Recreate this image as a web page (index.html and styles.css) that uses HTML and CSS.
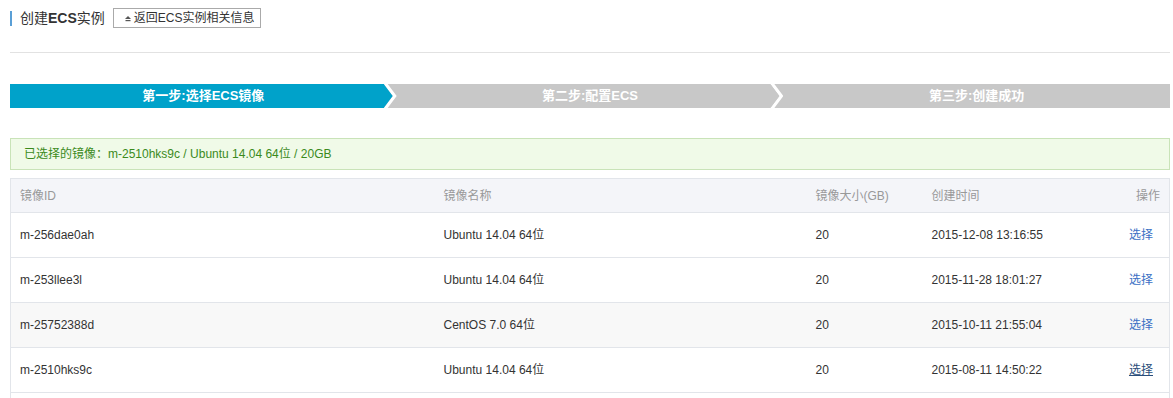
FILE: index.html
```html
<!DOCTYPE html>
<html lang="zh-CN">
<head>
<meta charset="utf-8">
<title>创建ECS实例</title>
<link rel="stylesheet" href="styles.css">
</head>
<body>
<div class="page">
  <div class="title-row">
    <h1 class="title">创建<b class="strong">ECS</b>实例</h1>
    <button class="back-btn" type="button">
      <svg class="back-icon" width="6" height="7" viewBox="0 0 6 7"><path d="M0 4 L3 1 L6 4 Z" fill="#555"/><rect x="0.5" y="5" width="5" height="1.2" fill="#555"/></svg>
      <span>返回ECS实例相关信息</span>
    </button>
  </div>
  <div class="divider"></div>

  <div class="steps">
    <div class="step active">第一步:选择ECS镜像</div>
    <div class="step">第二步:配置ECS</div>
    <div class="step last">第三步:创建成功</div>
  </div>

  <div class="alert">已选择的镜像：m-2510hks9c / Ubuntu 14.04 64位 / 20GB</div>

  <table class="images">
    <colgroup>
      <col class="c-id"><col class="c-name"><col class="c-size"><col class="c-time"><col class="c-op">
    </colgroup>
    <thead>
      <tr><th>镜像ID</th><th>镜像名称</th><th>镜像大小(GB)</th><th>创建时间</th><th class="op">操作</th></tr>
    </thead>
    <tbody>
      <tr><td>m-256dae0ah</td><td>Ubuntu 14.04 64位</td><td>20</td><td>2015-12-08 13:16:55</td><td class="op"><a href="#">选择</a></td></tr>
      <tr><td>m-253llee3l</td><td>Ubuntu 14.04 64位</td><td>20</td><td>2015-11-28 18:01:27</td><td class="op"><a href="#">选择</a></td></tr>
      <tr class="striped"><td>m-25752388d</td><td>CentOS 7.0 64位</td><td>20</td><td>2015-10-11 21:55:04</td><td class="op"><a href="#">选择</a></td></tr>
      <tr><td>m-2510hks9c</td><td>Ubuntu 14.04 64位</td><td>20</td><td>2015-08-11 14:50:22</td><td class="op"><a href="#" class="hover">选择</a></td></tr>
      <tr class="more"><td></td><td></td><td></td><td></td><td></td></tr>
    </tbody>
  </table>
</div>
</body>
</html>
```

FILE: styles.css
```css
* { box-sizing: border-box; }
html, body { margin: 0; padding: 0; background: #fff; }
body {
  font-family: "Liberation Sans", "Noto Sans CJK SC", sans-serif;
  color: #333;
  font-size: 12px;
  overflow: hidden;
}
.page {
  width: 1160px;
  margin: 0 0 0 10px;
  padding-top: 8px;
}
.title-row {
  display: flex;
  align-items: center;
  height: 20px;
}
.title {
  margin: 0;
  font-size: 14px;
  font-weight: normal;
  line-height: 15px;
  height: 15px;
  border-left: 2px solid #5a9fd6;
  padding-left: 8px;
  color: #333;
}
.title .strong { font-weight: bold; }
.back-btn {
  margin-left: 8px;
  height: 20px;
  display: flex;
  align-items: center;
  gap: 2px;
  padding: 0 6px 0 11px;
  border: 1px solid #aaa;
  background: #fff;
  font-family: inherit;
  font-size: 12px;
  line-height: 14px;
  color: #333;
  cursor: pointer;
}
.back-icon { display: block; margin-right: 1px; }
.divider {
  margin-top: 24px;
  border-top: 1px solid #e2e2e2;
}
.steps {
  margin-top: 31px;
  display: flex;
  height: 24px;
  background: #c8c8c8;
}
.step {
  --c: #c8c8c8;
  flex: 1;
  position: relative;
  color: #fff;
  font-weight: bold;
  font-size: 13px;
  line-height: 24px;
  text-align: center;
  background: linear-gradient(to right, var(--c) calc(100% - 13px), transparent calc(100% - 13px));
}
.step.active { --c: #00a2ca; }
.step.last { background: var(--c); }
.step:not(.last)::before,
.step:not(.last)::after {
  content: "";
  position: absolute;
  top: 0;
  right: 0;
  width: 13px;
  height: 100%;
}
.step:not(.last)::before {
  background: #fff;
  clip-path: polygon(0 0, 4px 0, 13px 50%, 4px 100%, 0 100%, 9px 50%);
}
.step:not(.last)::after {
  background: var(--c);
  clip-path: polygon(0 0, 9px 50%, 0 100%);
}
.alert {
  margin-top: 30px;
  height: 32px;
  line-height: 30px;
  padding: 0 13px;
  border: 1px solid #c9e3b8;
  background: #f0fae8;
  color: #3b8a1c;
  font-size: 12px;
}
.images {
  margin-top: 8px;
  width: 100%;
  border-collapse: collapse;
  table-layout: fixed;
  border-left: 1px solid #e2e5ea;
  border-right: 1px solid #e2e5ea;
}
.c-id { width: 424px; }
.c-name { width: 372px; }
.c-size { width: 116px; }
.c-time { width: 180px; }
.images th,
.images td {
  line-height: 16px;
  vertical-align: middle;
  white-space: nowrap;
}
.images th {
  height: 34px;
  background: #f4f5f9;
  color: #999;
  font-weight: normal;
  text-align: left;
  padding: 0 9px;
  border-top: 1px solid #e2e5ea;
  border-bottom: 1px solid #e2e5ea;
}
.images td {
  height: 45px;
  padding: 0 9px;
  border-bottom: 1px solid #e2e5ea;
  color: #333;
}
.images th.op { text-align: right; padding-right: 9px; }
.images td.op { text-align: right; padding-right: 16px; }
.images tr.striped td { background: #f8f8f8; }
.images a {
  color: #3a6fc4;
  text-decoration: none;
}
.images a.hover {
  color: #2a4d7a;
  text-decoration: underline;
}
```
